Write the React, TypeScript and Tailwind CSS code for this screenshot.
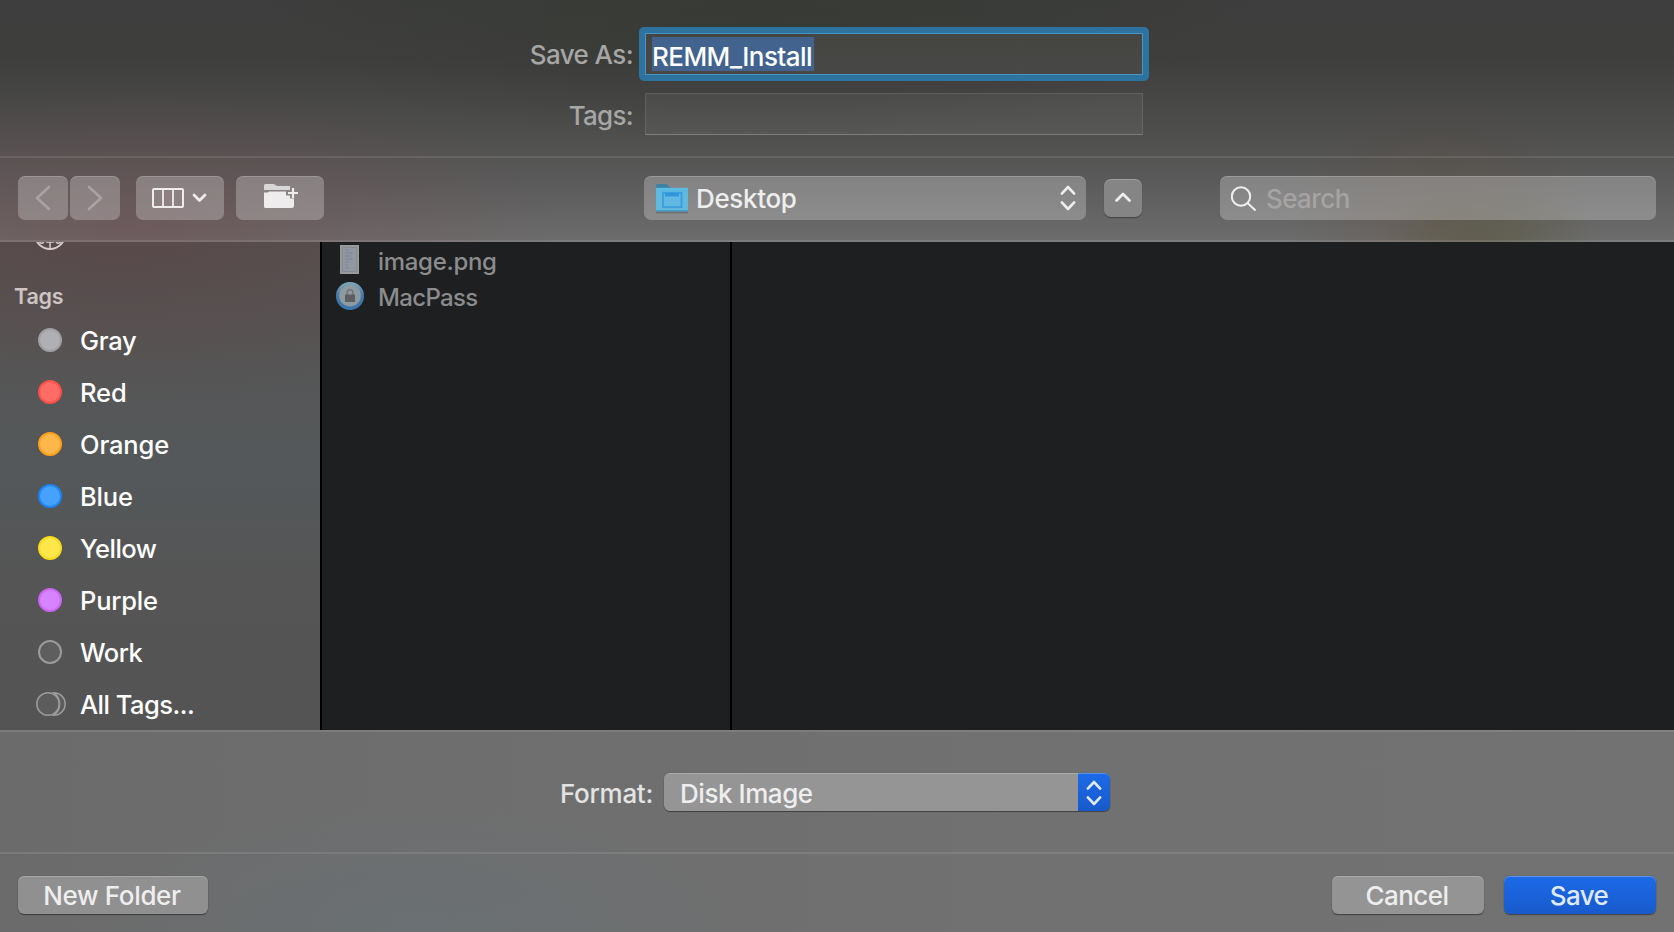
import type { ReactNode } from "react";

type Tag = { name: string; fill: string; ring: string; tracking: string };

const tags: Tag[] = [
  { name: "Gray", fill: "bg-[#b0b0b4]", ring: "border-[#a0a0a4]", tracking: "tracking-[-0.3px]" },
  { name: "Red", fill: "bg-[#ff6c66]", ring: "border-[#ff5047]", tracking: "tracking-[-0.1px]" },
  { name: "Orange", fill: "bg-[#ffb64a]", ring: "border-[#ffa01c]", tracking: "tracking-[-0.15px]" },
  { name: "Blue", fill: "bg-[#47a1ff]", ring: "border-[#1a86fc]", tracking: "tracking-[-0.2px]" },
  { name: "Yellow", fill: "bg-[#ffe64b]", ring: "border-[#f8dc1c]", tracking: "tracking-[-0.5px]" },
  { name: "Purple", fill: "bg-[#d783ff]", ring: "border-[#c964f6]", tracking: "tracking-[-0.2px]" },
  { name: "Work", fill: "bg-white/5", ring: "border-[#9b9b9b]", tracking: "tracking-[-0.5px]" },
];

function Chevrons({ className }: { className: string }) {
  return (
    <svg className={className} width="18" height="28" viewBox="0 0 18 28" fill="none" stroke="currentColor" strokeWidth="2.6" strokeLinecap="round" strokeLinejoin="round">
      <path d="M2.800 9.600 9 3l6.200 6.600M2.800 18.400 9 25l6.200-6.600" />
    </svg>
  );
}

function ToolButton({ className, children }: { className: string; children: ReactNode }) {
  return (
    <button className={`flex h-11 items-center justify-center rounded-[7px] bg-white/25 shadow-[inset_0_1px_0_rgba(255,255,255,0.18)] ${className}`}>
      {children}
    </button>
  );
}

function FolderIcon() {
  return (
    <svg width="32" height="32" viewBox="0 0 32 32">
      <defs>
        <linearGradient id="folder" x1="0" y1="0" x2="0" y2="1">
          <stop offset="0" stopColor="#5cbbe3" />
          <stop offset="1" stopColor="#62b9de" />
        </linearGradient>
      </defs>
      <path d="M0 6V3.500Q0 2 1.500 2h8q1.500 0 2.500 1.200T15 5.500v1H0z" fill="#3f81a3" />
      <path d="M0 5.800h32v23H0z" fill="url(#folder)" />
      <path d="M0 28h32v1.700H0z" fill="#429fcc" />
      <path d="M0 29.700h32v1.800H0z" fill="#707173" />
      <rect x="7" y="10.800" width="18.500" height="14.400" fill="#62b8e2" stroke="#3a9fdb" strokeWidth="1.800" />
      <path d="M9 11h14v3.500H9z" fill="#2d96da" />
    </svg>
  );
}

export default function App() {
  return (
    <div className="flex h-[932px] w-[1674px] flex-col overflow-hidden bg-[#6f6f6f] font-['Inter','Liberation_Sans',sans-serif] text-[26px] leading-[30px] font-[450]">
      <div className="flex h-[242px] flex-col bg-[radial-gradient(ellipse_110px_60px_at_1490px_245px,rgba(80,84,50,0.4),transparent),radial-gradient(ellipse_150px_130px_at_1440px_225px,rgba(96,74,56,0.3),transparent),radial-gradient(ellipse_420px_140px_at_140px_225px,rgba(112,76,80,0.5),transparent),radial-gradient(ellipse_500px_120px_at_760px_20px,rgba(52,56,48,0.6),transparent),linear-gradient(180deg,#3c3d3c_0px,#3f3f3e_60px,#494948_110px,#525251_150px,#5d5d5d_190px,#6d6d6d_242px)]">
        <div className="flex h-[158px] flex-col border-b-2 border-white/10 pt-[27px]">
          <div className="flex h-[54px] items-center">
            <label className="w-[633px] pt-0.5 text-right tracking-[-0.6px] text-[#a6a6a5]">Save As:</label>
            <div className="ml-1.5 h-[54px] w-[510px] rounded-[5px] bg-[#2e73a0] p-1.5">
              <div className="flex h-[42px] items-center border border-[#4795c4] bg-linear-to-b from-[#454642] to-[#484846] pl-1.5">
                <span className="flex h-[34px] w-[162px] items-center whitespace-nowrap bg-[#41638d] pt-1.5 tracking-[-0.55px] text-white">REMM_Install</span>
              </div>
            </div>
          </div>
          <div className="mt-3 flex h-[42px] items-center">
            <label className="w-[633px] pt-1 text-right tracking-[-0.7px] text-[#a6a6a5]">Tags:</label>
            <div className="ml-3 h-[42px] w-[498px] border border-white/10 border-b-[#7d7d7b] bg-white/5" />
          </div>
        </div>
        <div className="flex flex-1 border-b-2 border-white/10 px-[18px] pt-[18px]">
          <ToolButton className="w-[50px] text-[#aaa2a2]">
            <svg width="16" height="26" viewBox="0 0 16 26" fill="none" stroke="currentColor" strokeWidth="2.600" strokeLinecap="round" strokeLinejoin="round"><path d="M14 2 2 13l12 11" /></svg>
          </ToolButton>
          <ToolButton className="ml-0.5 w-[50px] text-[#aaa2a2]">
            <svg width="16" height="26" viewBox="0 0 16 26" fill="none" stroke="currentColor" strokeWidth="2.600" strokeLinecap="round" strokeLinejoin="round"><path d="m2 2 12 11L2 24" /></svg>
          </ToolButton>
          <ToolButton className="ml-4 w-[88px] gap-2 pr-0.5 text-[#eeeced]">
            <svg width="32" height="20" viewBox="0 0 32 20" fill="none" stroke="currentColor" strokeWidth="2"><rect x="1" y="1" width="30" height="18" rx="1" /><path d="M11 1v18M21 1v18" strokeWidth="1.800" /></svg>
            <svg width="15" height="10" viewBox="0 0 15 10" fill="none" stroke="currentColor" strokeWidth="2.800" strokeLinecap="round" strokeLinejoin="round"><path d="m2 2 5.500 5.500L13 2" /></svg>
          </ToolButton>
          <ToolButton className="ml-3 w-[88px] text-[#eeeced]">
            <svg className="mb-1 ml-px" width="36" height="26" viewBox="0 0 36 26">
              <path d="M1 7V2.500Q1 1 2.500 1H10q1.500 0 2.500 1t2.500 1h12v4z" fill="#d9d6d7" />
              <path d="M1 9.500h4L6 8.500h17v4h4v3h4V23q0 2-2 2H2.500Q1 25 1 23.500z" fill="currentColor" />
              <path d="M30 5v10M25 10h10" stroke="currentColor" strokeWidth="2.200" />
            </svg>
          </ToolButton>
          <div className="ml-80 flex h-11 w-[442px] items-center rounded-[7px] bg-white/25 pr-[9px] pl-3 shadow-[inset_0_1px_0_rgba(255,255,255,0.18)]">
            <FolderIcon />
            <span className="ml-2 pt-0.5 tracking-[-0.35px] text-[#eeeeee]">Desktop</span>
            <Chevrons className="ml-auto text-[#eeeeee]" />
          </div>
          <button className="mt-[3px] ml-[18px] flex h-[38px] w-[38px] items-center justify-center rounded-[7px] bg-[#858585] text-[#eeeeee] shadow-[inset_0_1px_0_rgba(255,255,255,0.2),0_1px_1px_rgba(0,0,0,0.35)]">
            <svg className="mb-0.5" width="18" height="12" viewBox="0 0 18 12" fill="none" stroke="currentColor" strokeWidth="2.800" strokeLinecap="round" strokeLinejoin="round"><path d="m2.500 9.500L9 3l6.500 6.500" /></svg>
          </button>
          <div className="ml-[78px] flex h-11 w-[436px] items-center rounded-[7px] bg-white/25 pl-[11px] shadow-[inset_0_1px_0_rgba(255,255,255,0.2)]">
            <svg className="mt-0.5" width="26" height="26" viewBox="0 0 26 26" fill="none" stroke="#eeeeee" strokeWidth="2.100"><circle cx="10" cy="10.500" r="9.200" /><path d="m16.500 17 8 7.500" /></svg>
            <span className="ml-[9px] pt-0.5 tracking-[-0.6px] text-[#a5a4a3]">Search</span>
          </div>
        </div>
      </div>

      <div className="flex h-[488px]">
        <aside className="flex w-[320px] flex-col overflow-hidden bg-[radial-gradient(ellipse_420px_160px_at_120px_0px,rgba(92,64,66,0.45),transparent),linear-gradient(180deg,#565151_0px,#565656_110px,#54585a_230px,#555_340px,#545454_488px)]">
          <div className="flex h-2 items-end pl-[34px]">
            <svg width="32" height="32" viewBox="0 0 32 32" fill="none" stroke="#d6cccc" strokeWidth="2">
              <circle cx="16" cy="16" r="15" />
              <path d="M16 16v14M5 23q2 4 5 1M27 23q-2 4-5 1M12 24h8" strokeWidth="1.500" />
            </svg>
          </div>
          <h2 className="mt-[31px] pl-3.5 text-[21.500px] font-semibold tracking-[-0.2px] text-[#cdc5c5]">Tags</h2>
          <ul className="mt-[3px] text-[25.500px] font-[550] text-white">
            {tags.map((t) => (
              <li key={t.name} className="flex h-[52px] items-center pl-[38px]">
                <span className={`size-6 rounded-full border-2 ${t.fill} ${t.ring}`} />
                <span className={`ml-[18px] pt-0.5 ${t.tracking}`}>{t.name}</span>
              </li>
            ))}
            <li className="flex h-[52px] items-center pl-9">
              <svg width="30" height="24" viewBox="0 0 30 24" fill="rgba(255,255,255,0.050)" stroke="#9b9b9b" strokeWidth="1.500">
                <circle cx="12" cy="12" r="11.200" />
                <path d="M18 .8a11.200 11.200 0 0 1 0 22.400a14 14 0 0 0 0-22.400z" />
              </svg>
              <span className="ml-3.5 pt-0.5 tracking-[-0.5px]">All Tags...</span>
            </li>
          </ul>
        </aside>
        <div className="w-[412px] border-x-2 border-black bg-[#1e1f21] text-[24px] text-[#8b8c8d]">
          <div className="flex h-9 items-center pl-[18px]">
            <svg width="20" height="30" viewBox="0 0 20 30">
              <path d="M0 0h19v29H0z" fill="#98999b" />
              <path d="M2 2h15v25H2z" fill="#868b93" />
              <path d="M3 3h13v23H3z" fill="#9297a0" />
              <path d="M5 5h4M5 8h8M5 11h6M5 14h8M5 17h4M5 20h3M5 23h4" stroke="#78869c" strokeWidth="1.200" />
            </svg>
            <span className="ml-[18px] pt-[3px] tracking-[-0.3px]">image.png</span>
          </div>
          <div className="flex h-9 items-center pl-3.5">
            <svg width="28" height="28" viewBox="0 0 28 28">
              <defs>
                <linearGradient id="rim" x1="0" y1="0" x2="0" y2="1">
                  <stop offset="0" stopColor="#7fa9b8" />
                  <stop offset="0.5" stopColor="#4479a8" />
                  <stop offset="1" stopColor="#3b74ae" />
                </linearGradient>
              </defs>
              <circle cx="14" cy="14" r="14" fill="url(#rim)" />
              <circle cx="14" cy="13.700" r="10.800" fill="#8d9a9f" />
              <path d="M11.200 13v-2.500a2.800 2.800 0 0 1 5.600 0V13" fill="none" stroke="#737475" strokeWidth="1.600" />
              <rect x="9" y="12.500" width="10" height="7.500" rx="0.500" fill="#5d5e5f" />
            </svg>
            <span className="ml-3.5 pt-[3px] tracking-[-0.65px]">MacPass</span>
          </div>
        </div>
        <div className="flex-1 bg-[#1e1f21]" />
      </div>

      <div className="flex flex-1 flex-col bg-[radial-gradient(ellipse_330px_130px_at_420px_202px,rgba(100,114,122,0.4),transparent),linear-gradient(90deg,#6b6b6b,#717171_60%,#727272)]">
        <div className="flex h-[122px] items-start border-t-2 border-white/10 pt-[41px] text-[#e3e3e3]">
          <label className="w-[653px] pt-[6px] text-right tracking-[-0.3px]">Format:</label>
          <div className="ml-[11px] flex h-[38px] w-[446px] rounded-[6px] shadow-[0_1px_1px_rgba(0,0,0,0.4),0_0_1px_rgba(0,0,0,0.4)]">
            <span className="flex h-full flex-1 items-center rounded-l-[6px] border-t border-[#acacac] bg-[#959595] pt-0.5 pl-4 tracking-[-0.45px] text-[#eeeeee]">Disk Image</span>
            <span className="flex h-full w-8 items-center justify-center rounded-r-[6px] border-t border-[#5a93ef] bg-linear-to-b from-[#1c6ae8] to-[#185acb]">
              <Chevrons className="text-[#dfe9fb]" />
            </span>
          </div>
        </div>
        <div className="flex flex-1 items-start border-t-2 border-white/10 px-[18px] pt-[22px] text-[#eeeeee]">
          <button className="h-[38px] w-[190px] rounded-[6px] bg-[#909090] pt-0.5 pr-0.5 tracking-[-0.35px] shadow-[inset_0_1px_0_#a8a8a8,0_1px_1px_rgba(0,0,0,0.4),0_0_1px_rgba(0,0,0,0.4)]">New Folder</button>
          <button className="ml-auto h-[38px] w-[152px] rounded-[6px] bg-[#949494] pt-0.5 pr-0.5 tracking-[-0.55px] shadow-[inset_0_1px_0_#acacac,0_1px_1px_rgba(0,0,0,0.4),0_0_1px_rgba(0,0,0,0.4)]">Cancel</button>
          <button className="ml-5 h-[38px] w-[152px] rounded-[6px] bg-linear-to-b from-[#1c6ae8] to-[#185acb] pt-0.5 pr-0.5 tracking-[-0.6px] text-[#e0eafb] shadow-[inset_0_1px_0_#5a93ef,0_1px_1px_rgba(0,0,0,0.4),0_0_1px_rgba(0,0,0,0.4)]">Save</button>
        </div>
      </div>
    </div>
  );
}
